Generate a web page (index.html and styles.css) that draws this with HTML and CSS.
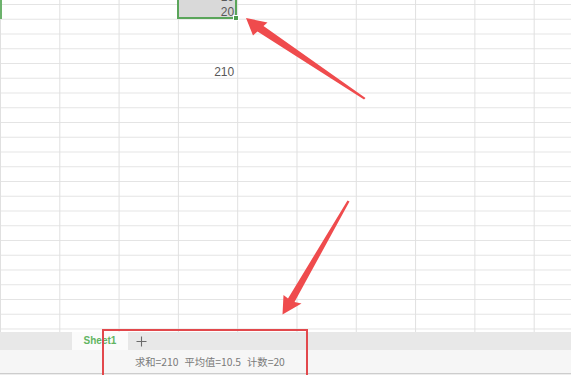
FILE: index.html
```html
<!DOCTYPE html>
<html lang="zh-CN">
<head>
    <meta charset="UTF-8">
    <meta name="viewport" content="width=device-width, initial-scale=1.0">
    <title>求和 - Sheet1</title>
    <link rel="stylesheet" href="styles.css">
</head>
<body>
    <div class="app">
        <div class="sheet">
            <div class="mark"></div>
            <div class="selection"><span class="handle"></span></div>
            <div class="cell top">19</div>
            <div class="cell second">20</div>
            <div class="cell total">210</div>
        </div>

        <div class="tabs">
            <div class="tab">Sheet1</div>
            <div class="add">
                <svg width="11" height="11" viewBox="0 0 11 11">
                    <path d="M5.5 0.5v10M0.5 5.5h10" stroke="#6a6a6a" stroke-width="1.1" fill="none"/>
                </svg>
            </div>
        </div>

        <div class="status">
            <span>求和=210</span>
            <span>平均值=10.5</span>
            <span>计数=20</span>
        </div>

        <!-- annotations drawn over the screenshot -->
        <div class="callout"></div>
        <svg class="arrows" width="571" height="375" viewBox="0 0 571 375">
            <polygon points="246,18 267.5,22.5 263.5,26 365.5,98 364,99.5 257.5,31.5 253,35.5" fill="#ef4b4d"/>
            <polygon points="282.5,314.5 283.5,295 288,298.5 347.5,200.5 349.5,201.5 294.5,302 301.5,303.5" fill="#ef4b4d"/>
        </svg>
    </div>
</body>
</html>
```

FILE: styles.css
```css
body {
    margin: 0;
    background-color: #ededed;
    font-family: "Liberation Sans", Arial, sans-serif;
    overflow: hidden;
}
.app {
    position: relative;
    width: 571px;
    height: 375px;
    overflow: hidden;
}
.sheet {
    display: grid;
    grid-template-columns: repeat(10, 59.3px);
    grid-template-rows: 4.5px;
    grid-auto-rows: 14.75px;
    height: 332px;
    overflow: hidden;
    background-color: #fff;
    background-image:
        linear-gradient(to right, #e0e0e0 1px, transparent 1px),
        linear-gradient(to bottom, #e4e4e4 1px, transparent 1px);
    background-size: 59.3px 100%, 100% 14.75px;
    background-position: 0 0, 0 4px;
}
.cell {
    font-size: 12px;
    line-height: 14.75px;
    color: #585858;
    text-align: right;
    padding-right: 3px;
    grid-column: 4;
    z-index: 1;
}
.cell.top {
    grid-row: 1;
    align-self: end;
    height: 14.75px;
}
.cell.second {
    grid-row: 2;
}
.cell.total {
    grid-row: 6;
    padding-top: 1px;
}
.selection {
    grid-column: 4;
    grid-row: 1 / 3;
    position: relative;
    margin-left: -1px;
    background-color: #d9d9d9;
    border: 2px solid #5aa55a;
    border-top: 0;
}
.handle {
    position: absolute;
    right: -4px;
    bottom: -4px;
    width: 4px;
    height: 4px;
    background-color: #4f9e4f;
    border: 1px solid #fff;
}
.mark {
    grid-column: 1;
    grid-row: 1 / 3;
    border-left: 2px solid #6cb26c;
}
.tabs {
    display: flex;
    height: 18px;
    padding-left: 72px;
    background-color: #e8e8e8;
}
.tab {
    width: 56px;
    background-color: #fbfbfb;
    color: #62b562;
    font-size: 10px;
    font-weight: bold;
    line-height: 18px;
    text-align: center;
}
.add {
    display: flex;
    align-items: center;
    justify-content: center;
    width: 26px;
}
.status {
    display: flex;
    align-items: center;
    gap: 6px;
    height: 23px;
    padding-left: 135px;
    background-color: #f6f6f6;
    border-bottom: 1px solid #cdcdcd;
    font-family: "Noto Sans CJK SC", sans-serif;
    font-size: 10.3px;
    color: #7a7a7a;
}
.callout {
    position: absolute;
    left: 102px;
    top: 329px;
    width: 206px;
    height: 48px;
    box-sizing: border-box;
    border: 2px solid #e2484c;
}
.arrows {
    position: absolute;
    left: 0;
    top: 0;
    pointer-events: none;
}
```
